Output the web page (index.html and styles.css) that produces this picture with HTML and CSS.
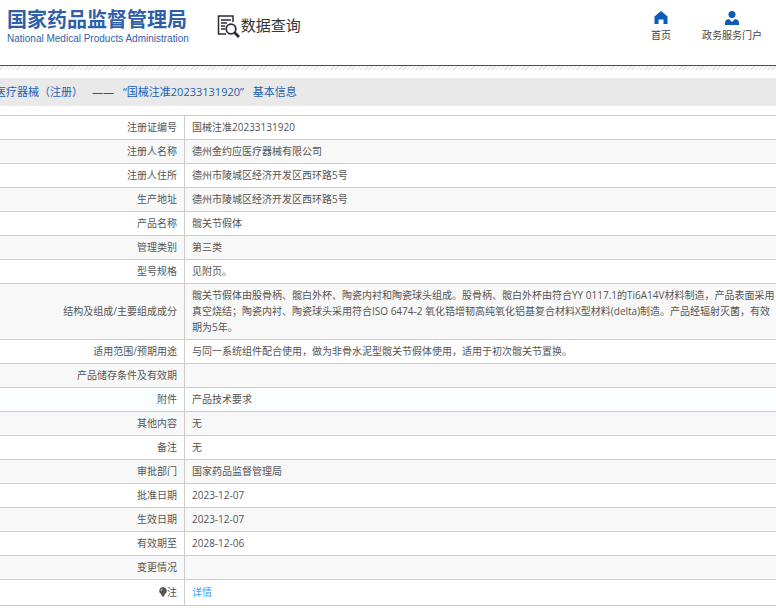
FILE: index.html
```html
<!DOCTYPE html>
<html lang="zh-CN">
<head>
    <meta charset="UTF-8">
    <meta name="viewport" content="width=device-width, initial-scale=1.0">
    <title>国家药品监督管理局 - 数据查询</title>
    <link rel="stylesheet" href="styles.css">
</head>
<body>

    <header class="header">
        <div class="logo">
            <div class="logo-cn">国家药品监督管理局</div>
            <div class="logo-en">National Medical Products Administration</div>
        </div>
        <div class="search-title">
            <svg width="24" height="24" viewBox="0 0 24 24" fill="none" stroke="#2b2b38">
                <path d="M16 8V2H1.500V20H9" stroke-width="1.500"/>
                <path d="M4 6h10M4 9h6M4 12h4M4 15h4" stroke-width="1.300"/>
                <circle cx="14" cy="15" r="4.800" stroke-width="1.800"/>
                <path d="M17.500 18.500L22 23" stroke-width="2.800"/>
            </svg>
            <span>数据查询</span>
        </div>
        <nav class="nav">
            <a href="#">
                <svg width="14" height="14" viewBox="0 0 14 14" fill="#0a5cb8">
                    <path d="M7 0L0.500 5.500V13H4.500V8.500H9.500V13H13.500V5.500z"/>
                </svg>
                <span>首页</span>
            </a>
            <a href="#">
                <svg width="14" height="14" viewBox="0 0 14 14" fill="#0a5cb8">
                    <circle cx="7" cy="3.500" r="3.500"/>
                    <path d="M0 14V12Q0 8.500 4 8L7 11L10 8Q14 8.500 14 12V14z"/>
                </svg>
                <span>政务服务门户</span>
            </a>
        </nav>
    </header>
    <div class="stripes"></div>

    <main>
        <h1 class="page-title">
            <span>医疗器械（注册）</span>
            <span>——</span>
            <span>“国械注准20233131920”</span>
            <span>基本信息</span>
        </h1>

        <table class="info">
            <tbody>
                <tr><th scope="row">注册证编号</th><td>国械注准20233131920</td></tr>
                <tr><th scope="row">注册人名称</th><td>德州金约应医疗器械有限公司</td></tr>
                <tr><th scope="row">注册人住所</th><td>德州市陵城区经济开发区西环路5号</td></tr>
                <tr><th scope="row">生产地址</th><td>德州市陵城区经济开发区西环路5号</td></tr>
                <tr><th scope="row">产品名称</th><td>髋关节假体</td></tr>
                <tr><th scope="row">管理类别</th><td>第三类</td></tr>
                <tr><th scope="row">型号规格</th><td>见附页。</td></tr>
                <tr><th scope="row">结构及组成/主要组成成分</th><td>髋关节假体由股骨柄、髋白外杯、陶瓷内衬和陶瓷球头组成。股骨柄、髋白外杯由符合YY 0117.1的Ti6A14V材料制造，产品表面采用真空烧结；陶瓷内衬、陶瓷球头采用符合ISO 6474-2 氧化锆增韧高纯氧化铝基复合材料X型材料(delta)制造。产品经辐射灭菌，有效期为5年。</td></tr>
                <tr><th scope="row">适用范围/预期用途</th><td>与同一系统组件配合使用，做为非骨水泥型髋关节假体使用，适用于初次髋关节置换。</td></tr>
                <tr><th scope="row">产品储存条件及有效期</th><td></td></tr>
                <tr class="active"><th scope="row">附件</th><td>产品技术要求</td></tr>
                <tr><th scope="row">其他内容</th><td>无</td></tr>
                <tr><th scope="row">备注</th><td>无</td></tr>
                <tr><th scope="row">审批部门</th><td>国家药品监督管理局</td></tr>
                <tr><th scope="row">批准日期</th><td>2023-12-07</td></tr>
                <tr><th scope="row">生效日期</th><td>2023-12-07</td></tr>
                <tr><th scope="row">有效期至</th><td>2028-12-06</td></tr>
                <tr><th scope="row">变更情况</th><td></td></tr>
                <tr class="note">
                    <th scope="row">
                        <svg class="bulb" width="8" height="10" viewBox="0 0 8 10">
                            <path d="M4 0a3.800 3.800 0 0 1 2 7L5 9.500h-2L2 7A3.800 3.800 0 0 1 4 0z" fill="#555"/>
                            <path d="M2 4a2 2 0 0 1 1.500-2" fill="none" stroke="#ccc"/>
                        </svg>注</th>
                    <td><a href="#">详情</a></td>
                </tr>
            </tbody>
        </table>
    </main>

</body>
</html>
```
FILE: styles.css
```css
body {
    margin: 0;
    background: #fff;
    color: #555;
    font-family: "Open Sans", "Noto Sans CJK SC", sans-serif;
    font-size: 10px;
    line-height: 16px;
}
a {
    color: #409eff;
    text-decoration: none;
}
.header {
    display: flex;
    align-items: flex-start;
    padding: 9px 14px 18px 7px;
    border-bottom: 1px solid #1c5a8e;
}
.header svg {
    display: block;
}
.logo {
    color: #2f5fa8;
    white-space: nowrap;
}
.logo-cn {
    font-size: 20px;
    line-height: 22px;
    font-weight: bold;
}
.logo-en {
    font-family: "Liberation Sans", Arial, sans-serif;
    font-size: 10px;
}
.search-title {
    display: flex;
    margin-left: 28px;
    padding-top: 5px;
    color: #333;
    font-size: 15px;
    line-height: 22px;
}
.nav {
    display: flex;
    gap: 31px;
    margin-left: auto;
    padding-top: 2px;
}
.nav a {
    display: flex;
    flex-direction: column;
    align-items: center;
    gap: 2px;
    color: #444;
}
.stripes {
    height: 4px;
    margin-bottom: 8px;
    background: repeating-linear-gradient(135deg, #fff 0, #fff 2px, #e2e2e2 2px, #e2e2e2 3px);
}
.page-title {
    display: flex;
    gap: 9px;
    margin: 0 0 9px;
    background: #e9e9e9;
    color: #1a5fb4;
    font-size: 11px;
    font-weight: normal;
    line-height: 28px;
    text-indent: -5px;
    white-space: nowrap;
}
.page-title span + span {
    text-indent: 0;
}
.info {
    width: 100%;
    border-collapse: collapse;
}
.info th,
.info td {
    padding: 3px 7px 4px;
    height: 16px;
    border-top: 1px solid #ccc;
    border-bottom: 1px solid #ccc;
    text-align: left;
}
.info th {
    width: 170px;
    border-right: 1px solid #ccc;
    font-weight: normal;
    text-align: right;
}
.info td {
    padding-right: 0;
}
.info tr:nth-child(even) {
    background: #f8f8f8;
}
.info .active {
    background: #fbfeff;
}
.info .note th,
.info .note td {
    padding-top: 4px;
    padding-bottom: 5px;
}
.bulb {
    vertical-align: -1px;
}
```
